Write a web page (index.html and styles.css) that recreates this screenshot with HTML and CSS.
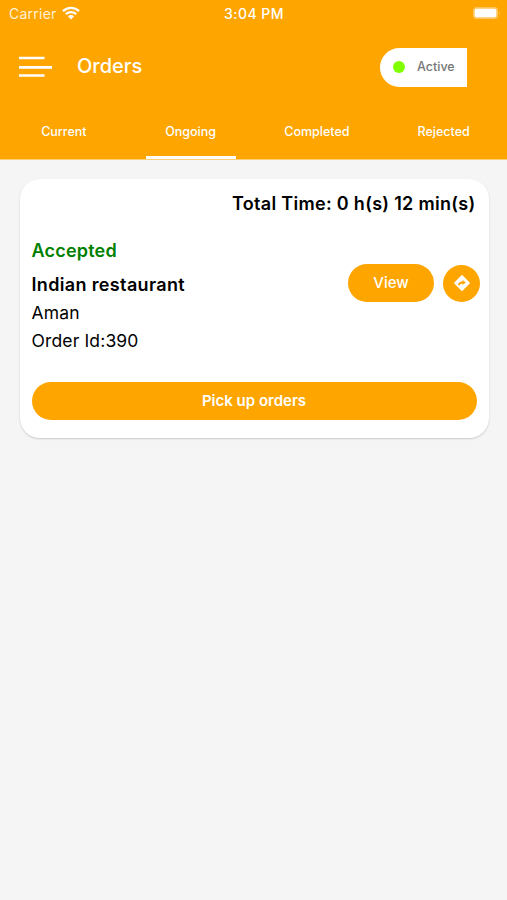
FILE: index.html
```
<!DOCTYPE html>
<html lang="en">
<head>
    <meta charset="UTF-8">
    <meta name="viewport" content="width=device-width, initial-scale=1.0">
    <title>Orders</title>
    <link rel="stylesheet" href="styles.css">
</head>
<body>
    <header class="header">
        <div class="status-bar">
            <div class="carrier">
                <span>Carrier</span>
                <svg class="wifi" width="18" height="14" viewBox="0 0 18 14">
                    <path d="M1 5.2C5.6 .8 12.4 .8 17 5.2" />
                    <path d="M3.8 8.2C6.8 5.4 11.2 5.4 14.2 8.2" />
                    <path class="wifi-dot" d="M5.9 10.3Q9 7.9 12.1 10.3L9 13.5Z" />
                </svg>
            </div>
            <span class="time">3:04 PM</span>
            <div class="battery-box">
                <svg width="30" height="14" viewBox="0 0 30 14">
                    <rect x="1" y="1" width="25" height="12" rx="3.5" fill="#ffc55c" />
                    <rect x="2.7" y="2.7" width="21.6" height="8.6" rx="1.8" fill="white" />
                    <path d="M27.3 5.2Q29 7 27.3 8.8Z" fill="#ffd58a" />
                </svg>
            </div>
        </div>

        <div class="navbar">
            <svg class="menu" width="33" height="22" viewBox="0 0 33 22">
                <path d="M0 2H25.5M0 11.3H33M0 19.5H25.5" />
            </svg>
            <h1>Orders</h1>
            <div class="active-pill">
                <span class="dot"></span>
                <span class="active-text">Active</span>
            </div>
        </div>

        <nav class="tabs">
            <a class="tab">Current</a>
            <a class="tab selected">Ongoing</a>
            <a class="tab">Completed</a>
            <a class="tab">Rejected</a>
        </nav>
    </header>

    <main class="card">
        <p class="total">Total Time: 0 h(s) 12 min(s)</p>
        <p class="status">Accepted</p>
        <div class="order">
            <div class="details">
                <p class="restaurant">Indian restaurant</p>
                <p class="name">Aman</p>
                <p class="order-id">Order Id:390</p>
            </div>
            <div class="actions">
                <button class="view">View</button>
                <button class="direction">
                    <svg width="18" height="18" viewBox="0 0 18 18">
                        <path class="diamond" d="M9 1.9L16.1 9L9 16.1L1.9 9Z" />
                        <path class="arrow" d="M5.9 11.2C5.9 9 7.2 8.5 10 8.5" />
                        <path class="arrow-head" d="M9.5 5.9L12.8 8.5L9.5 11.1Z" />
                    </svg>
                </button>
            </div>
        </div>
        <button class="pickup">Pick up orders</button>
    </main>
</body>
</html>
```

FILE: styles.css
```
*{
    margin: 0;
    padding: 0;
    box-sizing: border-box;
}

body{
    min-height: 100vh;
    background-color: #f5f5f5;
    font-family: Inter, "Liberation Sans", sans-serif;
    color: black;
}

button{
    border: none;
    font-family: inherit;
    background-color: #ffa500;
    color: white;
}

.header{
    height: 160px;
    background-color: #ffa500;
    color: white;
    border-bottom: 1px solid #ffcf78;
    display: flex;
    flex-direction: column;
}

.status-bar{
    height: 27px;
    padding: 0 5px 0 9px;
    display: grid;
    grid-template-columns: 1fr auto 1fr;
    align-items: center;
    font-size: 14px;
}
.carrier{
    display: flex;
    align-items: center;
    gap: 5px;
    color: #fff1d5;
    letter-spacing: 0.25px;
}
.wifi{
    margin-top: -2px;
    fill: none;
    stroke: white;
    stroke-width: 2.3;
}
.wifi .wifi-dot{
    fill: white;
    stroke: none;
}
.time{
    margin-right: 3px;
    font-weight: 500;
    letter-spacing: 0.5px;
}
.battery-box{
    margin-top: -1px;
    display: flex;
    justify-content: flex-end;
}

.navbar{
    height: 80px;
    padding: 0 40px 0 19px;
    display: flex;
    align-items: center;
}
.menu{
    stroke: white;
    stroke-width: 2.7;
}
.navbar h1{
    margin: -3px 0 0 25px;
    font-size: 20px;
    font-weight: 500;
}
.active-pill{
    width: 87px;
    height: 39px;
    margin-left: auto;
    padding-left: 13px;
    border-radius: 20px 0 0 20px;
    background-color: white;
    color: #777;
    display: flex;
    align-items: center;
    gap: 12px;
    font-size: 12.5px;
    font-weight: 500;
}
.active-text{
    margin-top: -2px;
}
.dot{
    width: 12px;
    height: 12px;
    border-radius: 50%;
    background-color: #7fff00;
}

.tabs{
    flex: 1;
    display: grid;
    grid-template-columns: repeat(4, 1fr);
    justify-items: center;
}
.tab{
    width: 90px;
    padding-top: 17px;
    text-align: center;
    font-size: 12.5px;
    font-weight: 500;
    line-height: 16px;
    border-bottom: 3px solid transparent;
}
.tab:first-child,
.selected{
    margin-left: 1px;
}
.selected{
    border-color: white;
}

.card{
    height: 259px;
    margin: 19px 18.5px 0 19.5px;
    padding: 12px 12px 18px;
    border-radius: 20px;
    background-color: white;
    box-shadow: 0 1px 2px rgba(0, 0, 0, 0.18);
    display: flex;
    flex-direction: column;
    font-size: 17.5px;
}
.total{
    padding-right: 1px;
    text-align: right;
    font-size: 18px;
    font-weight: 600;
    line-height: 26px;
    letter-spacing: 0.3px;
}
.status{
    margin-top: 21px;
    font-size: 18px;
    font-weight: 600;
    line-height: 26px;
    letter-spacing: 0.2px;
    color: green;
}
.order{
    display: flex;
    justify-content: space-between;
}
.details{
    padding-top: 7px;
    line-height: 28px;
    letter-spacing: 0.15px;
}
.restaurant{
    font-size: 18px;
    font-weight: 600;
    letter-spacing: 0.35px;
}
.actions{
    display: flex;
    align-items: flex-start;
    gap: 9px;
    margin-right: -3.5px;
}
.view{
    width: 86px;
    height: 38px;
    padding-bottom: 2px;
    border-radius: 19px;
    font-size: 15px;
    font-weight: 500;
}
.direction{
    width: 37px;
    height: 37px;
    margin-top: 0.5px;
    border-radius: 50%;
    display: flex;
    align-items: center;
    justify-content: center;
}
.diamond{
    fill: white;
    stroke: white;
    stroke-width: 1.5;
    stroke-linejoin: round;
}
.arrow{
    fill: none;
    stroke: #ffa500;
    stroke-width: 1.8;
}
.arrow-head{
    fill: #ffa500;
}
.pickup{
    height: 38px;
    margin-top: auto;
    padding-bottom: 2px;
    border-radius: 19px;
    font-size: 15px;
    font-weight: 600;
}
```
